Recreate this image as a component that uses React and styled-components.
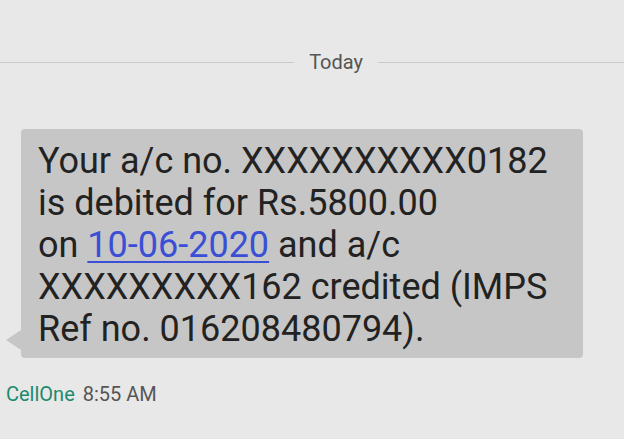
import React from "react";
import styled, { createGlobalStyle } from "styled-components";

const GlobalStyle = createGlobalStyle`
  html, body {
    margin: 0;
    padding: 0;
    background-color: #e8e8e8;
  }
  body {
    font-family: Roboto, "Noto Sans", sans-serif;
  }
`;

const Screen = styled.div`
  width: 624px;
  height: 439px;
  overflow: hidden;
  background-color: #e8e8e8;
  padding-top: 50px;
  box-sizing: border-box;
`;

const DateDivider = styled.div`
  display: flex;
  align-items: center;
  gap: 15px;
  height: 24px;
  font-size: 20px;
  color: #555555;

  &::before,
  &::after {
    content: "";
    flex: 1;
    height: 1px;
    background-color: #cacaca;
  }
  &::after {
    flex: 0 0 246px;
  }
`;

const Thread = styled.div`
  display: flex;
  flex-direction: column;
  align-items: flex-start;
  padding: 55px 0 0 6px;
`;

const Bubble = styled.div`
  position: relative;
  margin-left: 15px;
  width: 562px;
  height: 229px;
  box-sizing: border-box;
  padding: 11px 6px 0 17px;
  background-color: #c6c6c6;
  border-radius: 4px;
  color: #222222;
  font-size: 36px;
  line-height: 42px;
  white-space: nowrap;

  &::before {
    content: "";
    position: absolute;
    left: -15px;
    bottom: 8px;
    border-style: solid;
    border-width: 10px 15px 10px 0;
    border-color: transparent #c6c6c6 transparent transparent;
  }
`;

const DateLink = styled.span`
  color: #3a4fd6;
  text-decoration: underline;
  text-decoration-thickness: 2px;
  text-underline-offset: 4px;
`;

const Meta = styled.div`
  display: flex;
  gap: 8px;
  margin-top: 24px;
  font-size: 20px;
  line-height: 24px;
`;

const Sender = styled.span`
  color: #1d8a6c;
`;

const Time = styled.span`
  color: #555555;
`;

export default function App() {
  return (
    <Screen>
      <GlobalStyle />
      <DateDivider>Today</DateDivider>
      <Thread>
        <Bubble>
          Your a/c no. XXXXXXXXXX0182
          <br />
          is debited for Rs.5800.00
          <br />
          on <DateLink>10-06-2020</DateLink> and a/c
          <br />
          XXXXXXXXX162 credited (IMPS
          <br />
          Ref no. 016208480794).
        </Bubble>
        <Meta>
          <Sender>CellOne</Sender>
          <Time>8:55 AM</Time>
        </Meta>
      </Thread>
    </Screen>
  );
}
